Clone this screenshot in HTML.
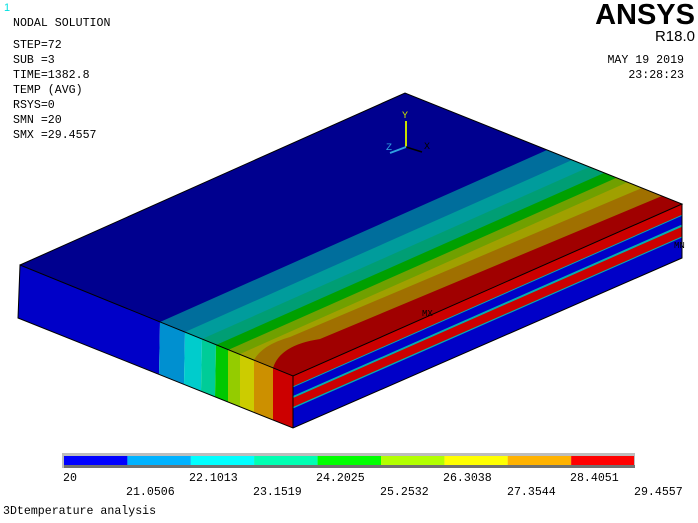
<!DOCTYPE html>
<html><head><meta charset="utf-8"><style>
html,body{margin:0;padding:0;background:#fff;}
body{width:698px;height:523px;overflow:hidden;position:relative;}
svg{position:absolute;left:0;top:0;}
text{font-family:"Liberation Mono",monospace;font-size:11.6px;fill:#000;}
</style></head><body>
<svg width="698" height="523" viewBox="0 0 698 523">
<!-- top face -->
<polygon points="20,265 405,93 682,204 293,376" fill="#a00000"/>
<path d="M20,265 L405,93 L662,196 L320,339 Q280,345 273,368 Z" fill="#a07000"/>
<path d="M20,265 L405,93 L642,188 L290,337 Q262,345 254,360 Z" fill="#a0a000"/>
<polygon points="20,265 405,93 628,182 240,354" fill="#70a000"/>
<polygon points="20,265 405,93 616,178 228,350" fill="#00a000"/>
<polygon points="20,265 405,93 604,173 216,345" fill="#009e74"/>
<polygon points="20,265 405,93 589,167 202,339" fill="#009c9c"/>
<polygon points="20,265 405,93 572,160 185,332" fill="#006e9c"/>
<polygon points="20,265 405,93 547,150 160,322" fill="#00008f"/>
<!-- left face -->
<polygon points="20,265 160,322 159,374 18,318" fill="#0000c8"/>
<polygon points="160,322 185,332 184,384 159,374" fill="#0090d0"/>
<polygon points="185,332 202,339 201,391 184,384" fill="#00cccc"/>
<polygon points="202,339 216,345 215,397 201,391" fill="#00cc98"/>
<polygon points="216,345 228,350 228,402 215,397" fill="#00c800"/>
<polygon points="228,350 240,354 240,407 228,402" fill="#94cc00"/>
<polygon points="240,354 254,360 254,412 240,407" fill="#cccc00"/>
<polygon points="254,360 273,368 273,420 254,412" fill="#cc9000"/>
<polygon points="273,368 293,376 293,428 273,420" fill="#cc0000"/>
<!-- right face -->
<polygon points="293,376 682,204 682,258 293,428" fill="#00b0b0"/>
<polygon points="293,376 682,204 682,214.8 293,386.4" fill="#cc0000"/>
<polygon points="293,387.4 682,215.8 682,224.5 293,396" fill="#0000c8"/>
<polygon points="293,398 682,226.7 682,236.4 293,407" fill="#cc0000"/>
<polygon points="293,408.5 682,237.5 682,258 293,428" fill="#0000c8"/>
<!-- edges -->
<polyline points="20,265 405,93 682,204 293,376 20,265 18,318 293,428 682,258 682,204" fill="none" stroke="#000" stroke-width="1"/>
<line x1="293" y1="376" x2="293" y2="428" stroke="#000"/>
<!-- triad -->
<line x1="406" y1="147" x2="406" y2="121" stroke="#c8e000" stroke-width="2"/>
<line x1="406" y1="147" x2="422" y2="152" stroke="#000" stroke-width="1.5"/>
<line x1="406" y1="147" x2="390" y2="153" stroke="#30a0e0" stroke-width="2"/>
<text x="402" y="118" style="font-size:10px;fill:#c8e000">Y</text>
<text x="424" y="149" style="font-size:10px">X</text>
<text x="386" y="150" style="font-size:10px;fill:#30a0e0">Z</text>
<text x="422" y="316" style="font-size:9px">MX</text>
<text x="674" y="248" style="font-size:9px">MN</text>
<!-- header text -->
<text x="4" y="11" style="fill:#00e0e0;font-family:'Liberation Sans',sans-serif;font-size:11px">1</text>
<text x="13" y="26">NODAL SOLUTION</text>
<text x="13" y="48">STEP=72</text>
<text x="13" y="63">SUB =3</text>
<text x="13" y="78">TIME=1382.8</text>
<text x="13" y="93">TEMP     (AVG)</text>
<text x="13" y="108">RSYS=0</text>
<text x="13" y="123">SMN =20</text>
<text x="13" y="138">SMX =29.4557</text>
<text x="695" y="24" text-anchor="end" style="font-family:'Liberation Sans',sans-serif;font-weight:bold;font-size:29px">ANSYS</text>
<text x="695" y="41" text-anchor="end" style="font-family:'Liberation Sans',sans-serif;font-size:15px">R18.0</text>
<text x="684" y="63" text-anchor="end">MAY 19 2019</text>
<text x="684" y="78" text-anchor="end">23:28:23</text>
<!-- legend -->
<rect x="62" y="453" width="573" height="15" fill="#bdbdbd"/>
<rect x="64" y="465" width="571" height="3" fill="#707070"/>
<rect x="64" y="456" width="63.4" height="9" fill="#0000ff"/>
<rect x="127.4" y="456" width="63.4" height="9" fill="#00b2ff"/>
<rect x="190.8" y="456" width="63.4" height="9" fill="#00ffff"/>
<rect x="254.2" y="456" width="63.4" height="9" fill="#00ffb2"/>
<rect x="317.6" y="456" width="63.4" height="9" fill="#00ff00"/>
<rect x="381" y="456" width="63.4" height="9" fill="#b2ff00"/>
<rect x="444.4" y="456" width="63.4" height="9" fill="#ffff00"/>
<rect x="507.8" y="456" width="63.4" height="9" fill="#ffb200"/>
<rect x="571.2" y="456" width="62.8" height="9" fill="#ff0000"/>
<text x="63" y="481">20</text>
<text x="189" y="481">22.1013</text>
<text x="316" y="481">24.2025</text>
<text x="443" y="481">26.3038</text>
<text x="570" y="481">28.4051</text>
<text x="126" y="495">21.0506</text>
<text x="253" y="495">23.1519</text>
<text x="380" y="495">25.2532</text>
<text x="507" y="495">27.3544</text>
<text x="634" y="495">29.4557</text>
<text x="3" y="514">3Dtemperature analysis</text>
</svg>
</body></html>
